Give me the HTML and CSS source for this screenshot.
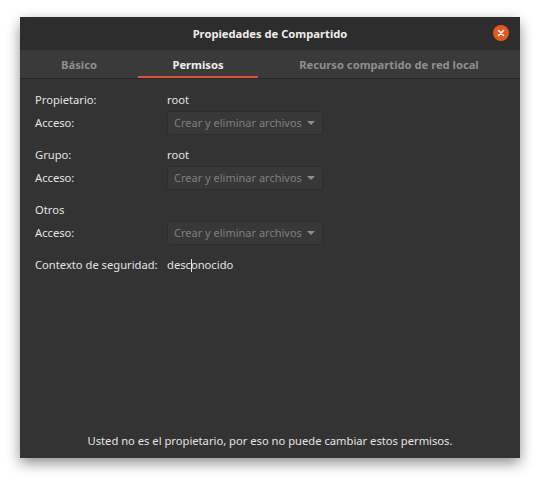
FILE: index.html
```html
<!DOCTYPE html>
<html lang="es">
<head>
  <meta charset="UTF-8" />
  <title>Propiedades de Compartido</title>
  <link rel="stylesheet" href="styles.css">
</head>
<body>
  <div class="window">
    <div class="titlebar">
      <span class="title">Propiedades de Compartido</span>
      <span class="close">
        <svg width="8" height="8" viewBox="0 0 8 8"><path d="M1.5 1.5L6.5 6.5M6.5 1.5L1.5 6.5" stroke="#fff" stroke-width="1.6" stroke-linecap="round"/></svg>
      </span>
    </div>
    <div class="tabs">
      <div class="tab tab-basic">Básico</div>
      <div class="tab tab-perms active">Permisos</div>
      <div class="tab tab-share">Recurso compartido de red local</div>
    </div>
    <div class="content">
      <div class="form">
        <div class="row"><span class="label">Propietario:</span><span class="value">root</span></div>
        <div class="row">
          <span class="label">Acceso:</span>
          <span class="combo">Crear y eliminar archivos<span class="arrow"></span></span>
        </div>
        <div class="row group-start"><span class="label">Grupo:</span><span class="value">root</span></div>
        <div class="row">
          <span class="label">Acceso:</span>
          <span class="combo">Crear y eliminar archivos<span class="arrow"></span></span>
        </div>
        <div class="row group-start"><span class="label">Otros</span></div>
        <div class="row">
          <span class="label">Acceso:</span>
          <span class="combo">Crear y eliminar archivos<span class="arrow"></span></span>
        </div>
        <div class="row group-start">
          <span class="label">Contexto de seguridad:</span>
          <span class="value">desc<span class="caret"></span>onocido</span>
        </div>
      </div>
      <div class="notice">Usted no es el propietario, por eso no puede cambiar estos permisos.</div>
    </div>
  </div>
</body>
</html>
```

FILE: styles.css
```css
* {
  box-sizing: border-box;
}
body {
  margin: 0;
  width: 540px;
  height: 480px;
  padding: 17px 20px 0 20px;
  background: #fff;
  font-family: "Noto Sans", "Open Sans", sans-serif;
  font-size: 11.2px;
  overflow: hidden;
}
.window {
  width: 500px;
  height: 441px;
  display: flex;
  flex-direction: column;
  background: #333333;
  border-radius: 7px 7px 0 0;
  box-shadow: 0 5px 14px rgba(0, 0, 0, 0.45);
  color: #e4e4e2;
}

.titlebar {
  height: 33px;
  flex-shrink: 0;
  position: relative;
  display: flex;
  align-items: center;
  justify-content: center;
  background: #2d2d2d;
}
.title {
  font-weight: 700;
  color: #eeeeec;
}
.close {
  position: absolute;
  right: 11px;
  top: 8px;
  width: 16px;
  height: 16px;
  border-radius: 50%;
  background: #e2581f;
  display: flex;
  align-items: center;
  justify-content: center;
}

.tabs {
  height: 29px;
  flex-shrink: 0;
  display: flex;
  background: #3a3a3a;
  border-bottom: 1px solid #282828;
  font-weight: 700;
  color: #8f8f8d;
}
.tab {
  display: flex;
  align-items: center;
  justify-content: center;
}
.tab-basic {
  width: 118px;
}
.tab-perms {
  width: 120px;
}
.tab-share {
  width: 262px;
}
.tab.active {
  color: #eeeeec;
  box-shadow: inset 0 -2px 0 #d9543a;
}

.content {
  flex: 1;
  display: flex;
  flex-direction: column;
  padding: 9px 15px 10px 15px;
}
.form {
  flex: 1;
}
.row {
  display: flex;
  align-items: center;
  height: 23px;
}
.row.group-start {
  margin-top: 9px;
}
.label {
  width: 132px;
  flex-shrink: 0;
}
.combo {
  width: 156px;
  height: 24px;
  flex-shrink: 0;
  padding: 0 6px;
  display: flex;
  align-items: center;
  justify-content: space-between;
  white-space: nowrap;
  font-size: 11px;
  background: #383838;
  border: 1px solid #2e2e2e;
  border-radius: 3px;
  color: #7f7f7d;
}
.arrow {
  width: 0;
  height: 0;
  margin-right: 1px;
  border-left: 4px solid transparent;
  border-right: 4px solid transparent;
  border-top: 4px solid #8f8f8d;
}
.caret {
  display: inline-block;
  width: 1px;
  height: 13px;
  margin-right: -1px;
  vertical-align: -3px;
  background: #e4e4e2;
}
.notice {
  text-align: center;
}
```
